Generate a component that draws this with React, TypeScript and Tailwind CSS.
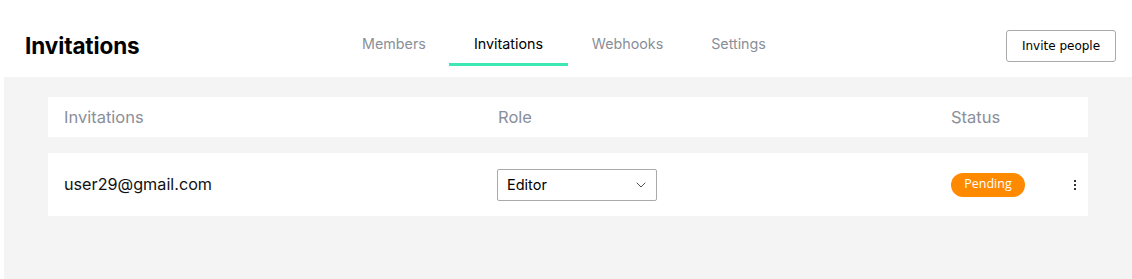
import { ChevronDown } from 'lucide-react'

const tabs = [
  { label: 'Members', width: 'w-[110px]' },
  { label: 'Invitations', width: 'w-[119px]' },
  { label: 'Webhooks', width: 'w-[119px]' },
  { label: 'Settings', width: 'w-[103px]' },
]

export default function App() {
  return (
    <div className="h-[279px] w-[1132px] bg-white font-['Inter',sans-serif] flex flex-col">
      {/* Header */}
      <header className="h-[77px] flex items-start pl-[25px] pr-4">
        <div className="w-[314px] pt-[32px]">
          <h1 className="text-[22.5px] leading-[28px] font-bold text-black tracking-[-0.1px]">Invitations</h1>
        </div>
        <nav className="flex pt-[34px]">
          {tabs.map((tab) => (
            <div
              key={tab.label}
              className={`${tab.width} text-center h-[32px] text-[14.3px] leading-[20px] ${
                tab.label === 'Invitations'
                  ? 'text-black border-b-[3px] border-[#3de8b4]'
                  : 'text-[#8a8f99]'
              }`}
            >
              {tab.label}
            </div>
          ))}
        </nav>
        <button className="ml-auto mt-[30px] h-[32px] w-[110px] border border-[#aaaaaa] rounded-[3px] bg-white text-[12px] font-medium text-black font-['DejaVu_Sans',sans-serif]">
          Invite people
        </button>
      </header>

      {/* Content */}
      <main className="flex-1 ml-[4px] bg-[#f4f4f4] pt-5 pl-[44px] pr-[44px]">
        <div className="h-[40px] bg-white flex items-center text-[16.5px] text-[#8a8f99] pl-4">
          <div className="w-[434px]">Invitations</div>
          <div className="w-[453px]">Role</div>
          <div>Status</div>
        </div>
        <div className="mt-4 h-[63px] bg-white flex items-center pl-4 pr-[12px]">
          <div className="w-[433px] text-[16.2px] text-[#111]">user29@gmail.com</div>
          <div className="w-[454px]">
            <div className="w-[160px] h-[32px] border border-[#aaaaaa] rounded-[2px] flex items-center justify-between pl-[9px] pr-[7px] text-[14.5px] text-black">
              <span>Editor</span>
              <ChevronDown size={16} strokeWidth={1.3} className="text-[#333]" />
            </div>
          </div>
          <span className="h-[24px] w-[74px] rounded-full bg-[#ff8a00] text-white text-[12.5px] flex items-center justify-center font-['Open_Sans',sans-serif]">
            Pending
          </span>
          <div className="ml-auto flex flex-col gap-[2px]">
            <span className="w-[2px] h-[2px] bg-[#333]" />
            <span className="w-[2px] h-[2px] bg-[#333]" />
            <span className="w-[2px] h-[2px] bg-[#333]" />
          </div>
        </div>
      </main>
    </div>
  )
}
